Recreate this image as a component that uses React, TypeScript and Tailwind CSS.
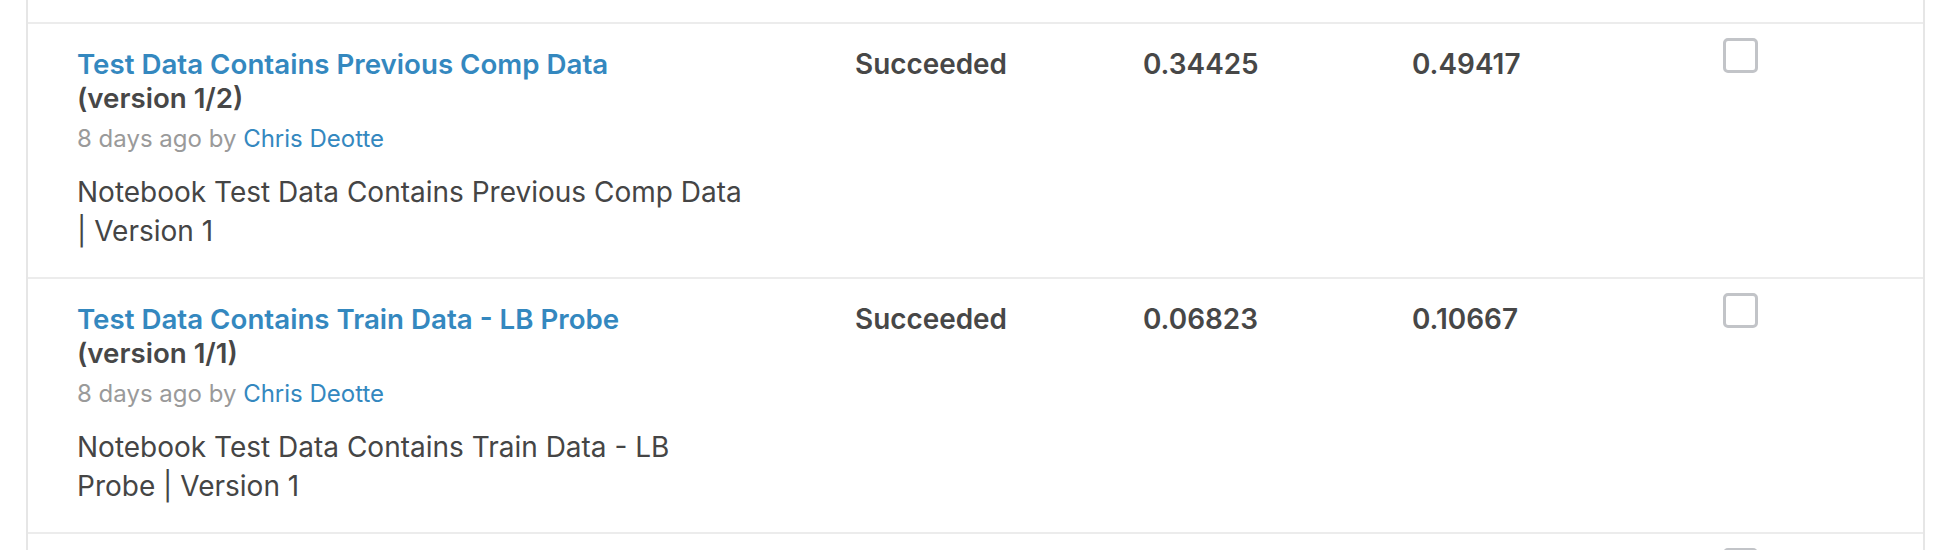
import React from "react";

type Row = {
  title: string;
  version: string;
  author: string;
  desc: string;
  status: string;
  pub: string;
  priv: string;
};

const rows: Row[] = [
  {
    title: "Test Data Contains Previous Comp Data",
    version: "(version 1/2)",
    author: "Chris Deotte",
    desc: "Notebook Test Data Contains Previous Comp Data | Version 1",
    status: "Succeeded",
    pub: "0.34425",
    priv: "0.49417",
  },
  {
    title: "Test Data Contains Train Data - LB Probe",
    version: "(version 1/1)",
    author: "Chris Deotte",
    desc: "Notebook Test Data Contains Train Data - LB Probe | Version 1",
    status: "Succeeded",
    pub: "0.06823",
    priv: "0.10667",
  },
];

function Checkbox() {
  return (
    <div className="-mt-[9px]">
      <div className="w-[35px] h-[35px] border-[3px] border-[#c2c4c8] rounded-[5px] bg-white" />
    </div>
  );
}

export default function App() {
  return (
    <div
      className="w-[1946px] h-[550px] overflow-hidden bg-white"
      style={{ fontFamily: "Inter, 'Noto Sans', sans-serif" }}
    >
      <div className="ml-[26px] w-[1899px] h-[550px] border-x-[2px] border-[#e6e6e6] pt-[22px]">
        {rows.map((r, i) => (
          <div key={i} className="flex border-t-[2px] border-[#ececec] h-[255px] pt-[23px]">
            <div className="w-[827px] pl-[49px] shrink-0">
              <div className="text-[27.7px] leading-[34px] font-semibold">
                <a className="text-[#3488bf]">{r.title}</a>
                <div className="text-[#474747]">{r.version}</div>
              </div>
              <div className="text-[24px] leading-[30px] mt-[9px] text-[#9a9a9a]">
                8 days ago by <span className="text-[#3488bf]">{r.author}</span>
              </div>
              <div className="text-[28px] leading-[39px] mt-[19px] text-[#454545] w-[676px]">
                {r.desc}
              </div>
            </div>
            <div className="w-[288px] shrink-0 text-[27.9px] leading-[34px] font-semibold text-[#474747]">
              {r.status}
            </div>
            <div className="w-[269px] shrink-0 text-[27.9px] leading-[34px] font-semibold text-[#474747]">
              {r.pub}
            </div>
            <div className="w-[311px] shrink-0 text-[27.9px] leading-[34px] font-semibold text-[#474747]">
              {r.priv}
            </div>
            <Checkbox />
          </div>
        ))}
        <div className="flex border-t-[2px] border-[#ececec] h-[256px] pt-[23px]">
          <div className="w-[1695px] shrink-0" />
          <Checkbox />
        </div>
      </div>
    </div>
  );
}
